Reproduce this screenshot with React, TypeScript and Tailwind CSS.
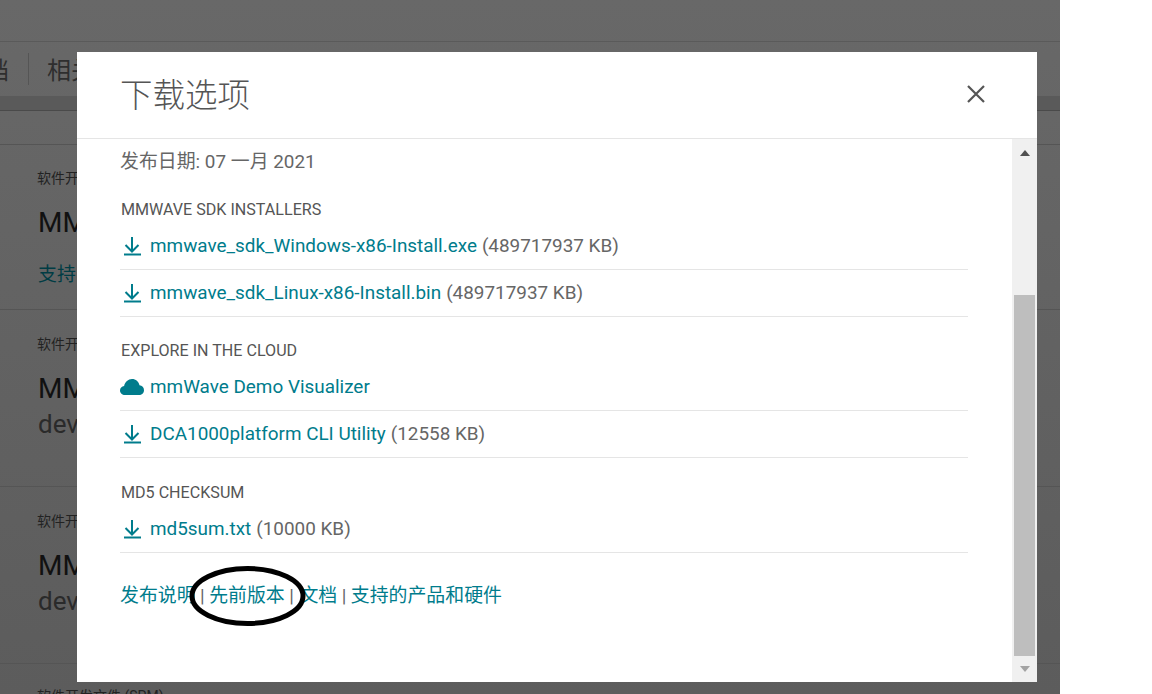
const FONT = "font-['Roboto','Noto_Sans_CJK_SC',sans-serif]";

function DownloadIcon() {
  return (
    <svg viewBox="0 0 20 20" className="w-5 h-5 shrink-0 mr-[8px] -mt-[1px]" fill="none" stroke="#007c8c" strokeWidth="2">
      <path d="M10 1v14" />
      <path d="M3.5 9l6.5 6.5L16.500 9" />
      <path d="M2 18.500h17" />
    </svg>
  );
}

function CloudIcon() {
  return (
    <svg viewBox="0 0 24 16" className="w-6 h-4 shrink-0 mr-[6px] -mt-[1px]" fill="#007c8c">
      <path d="M5 16C2.200 16 0 14 0 11.500 0 9.200 1.800 7.400 4.100 7.100 5 3 8.200 0 12 0c3.800 0 6.800 2.700 7.500 6.300 2.600.3 4.500 2.300 4.500 4.900C24 14 21.800 16 19 16H5z" />
    </svg>
  );
}

function FileRow({ name, size, cloud }: { name: string; size?: string; cloud?: boolean }) {
  return (
    <div className="flex items-center h-[47px] border-b border-[#e5e5e5] text-[18.900px]">
      {cloud ? <CloudIcon /> : <span className="pl-[2px]"><DownloadIcon /></span>}
      <a className="text-[#007c8c]">{name}</a>
      {size && <span className="text-[#666] ml-[5px]">{size}</span>}
    </div>
  );
}

function Heading({ children, className }: { children: string; className?: string }) {
  return <div className={`text-[16.100px] leading-[24px] pl-[1px] text-[#555] ${className}`}>{children}</div>;
}

function BgCard({ title, desc, teal, height }: { title: string; desc: string; teal?: boolean; height: string }) {
  return (
    <div className={`pl-[38px] pt-[24px] border-b border-[#555] ${height}`}>
      <div className={`text-[14px] leading-[20px] text-[#222] -ml-[1px] ${teal ? '-mt-[1px]' : ''}`}>软件开发套件 (SDK)</div>
      <div className="text-[28px] leading-[36px] text-[#111] mt-[17px]">{title}</div>
      <div className={`${teal ? 'text-[18.900px] text-[#003c44] mt-[20px]' : 'text-[26px] text-[#2a2a2a] -mt-[2px]'}`}>{desc}</div>
    </div>
  );
}

export default function App() {
  return (
    <div className={`${FONT} relative flex w-[1152px] h-[694px] overflow-hidden bg-white`}>
      {/* dimmed page behind the dialog */}
      <div className="w-[1060px] h-[694px] overflow-hidden bg-gradient-to-b from-[#686868] to-[#5c5c5c]">
        <div className="h-[42px] border-b border-[#5a5a5a]" />
        <div className="h-[54px] flex items-center -ml-[39px]">
          <span className="text-[24px] text-[#2e2e2e] mt-[3px]">文档</span>
          <span className="w-px h-[32px] bg-[#555] ml-[19px] mr-[18px]" />
          <span className="text-[24px] text-[#2e2e2e] mt-[3px]">相关文档</span>
        </div>
        <div className="h-[15px] bg-[#5a5a5a] border-b border-[#4a4a4a]" />
        <div className="h-[34px] border-b border-[#555]" />
        <BgCard title="MMWAVE SDK" desc="支持的产品" teal height="h-[165px]" />
        <BgCard title="MMWAVE" desc="devices" height="h-[177px]" />
        <BgCard title="MMWAVE" desc="devices" height="h-[177px]" />
        <div className="pl-[37px] pt-[22px] text-[14px] leading-[20px] text-[#222]">软件开发文件 (SPM)</div>
      </div>

      {/* dialog */}
      <div className="absolute left-[77px] top-[52px] w-[960px] h-[630px] bg-white flex flex-col">
        <div className="h-[87px] shrink-0 flex items-center justify-between pl-[43px] pr-[52px] border-b border-[#e5e5e5] pb-[1px]">
          <h2 className="text-[32.500px] font-light text-[#555] mt-[4px]">下载选项</h2>
          <svg viewBox="0 0 18 18" className="w-[18px] h-[18px] -mt-[1px]" fill="none" stroke="#555" strokeWidth="2.200">
            <path d="M1 1l16 16M17 1L1 17" />
          </svg>
        </div>
        <div className="flex flex-1 min-h-0">
          <div className="flex-1 pl-[43px] pr-[44px]">
            <div className="text-[18.900px] leading-[26px] text-[#666] mt-[10px]">发布日期: 07 一月 2021</div>
            <Heading className="mt-[23px]">MMWAVE SDK INSTALLERS</Heading>
            <div className="mt-[1px]">
              <FileRow name="mmwave_sdk_Windows-x86-Install.exe" size="(489717937 KB)" />
              <FileRow name="mmwave_sdk_Linux-x86-Install.bin" size="(489717937 KB)" />
            </div>
            <Heading className="mt-[22px]">EXPLORE IN THE CLOUD</Heading>
            <div className="mt-[1px]">
              <FileRow name="mmWave Demo Visualizer" cloud />
              <FileRow name="DCA1000platform CLI Utility" size="(12558 KB)" />
            </div>
            <Heading className="mt-[23px]">MD5 CHECKSUM</Heading>
            <div className="mt-[1px]">
              <FileRow name="md5sum.txt" size="(10000 KB)" />
            </div>
            <div className="mt-[30px] text-[18.900px] leading-[26px] text-[#666] flex gap-[4.500px]">
              <a className="text-[#007c8c]">发布说明</a>
              <span>|</span>
              <a className="text-[#007c8c]">先前版本</a>
              <span>|</span>
              <a className="text-[#007c8c] ml-[1px]">文档</a>
              <span>|</span>
              <a className="text-[#007c8c]">支持的产品和硬件</a>
            </div>
          </div>
          {/* scrollbar */}
          <div className="w-[25px] bg-[#f0f0f0] flex flex-col items-center">
            <div className="mt-[11px] w-0 h-0 border-l-[5.500px] border-r-[5.500px] border-b-[6px] border-l-transparent border-r-transparent border-b-[#505050]" />
            <div className="mt-[139px] w-[21px] h-[361px] bg-[#bebebe]" />
            <div className="mt-[10px] w-0 h-0 border-l-[5.500px] border-r-[5.500px] border-t-[6px] border-l-transparent border-r-transparent border-t-[#a3a3a3]" />
          </div>
        </div>
        {/* hand-drawn circle over the link */}
        <svg className="absolute left-[112px] top-[514px] w-[118px] h-[60px]" viewBox="0 0 118 60" fill="none" stroke="#000" strokeWidth="5">
          <ellipse cx="58.500" cy="30" rx="55.500" ry="27.500" />
        </svg>
      </div>
    </div>
  );
}
